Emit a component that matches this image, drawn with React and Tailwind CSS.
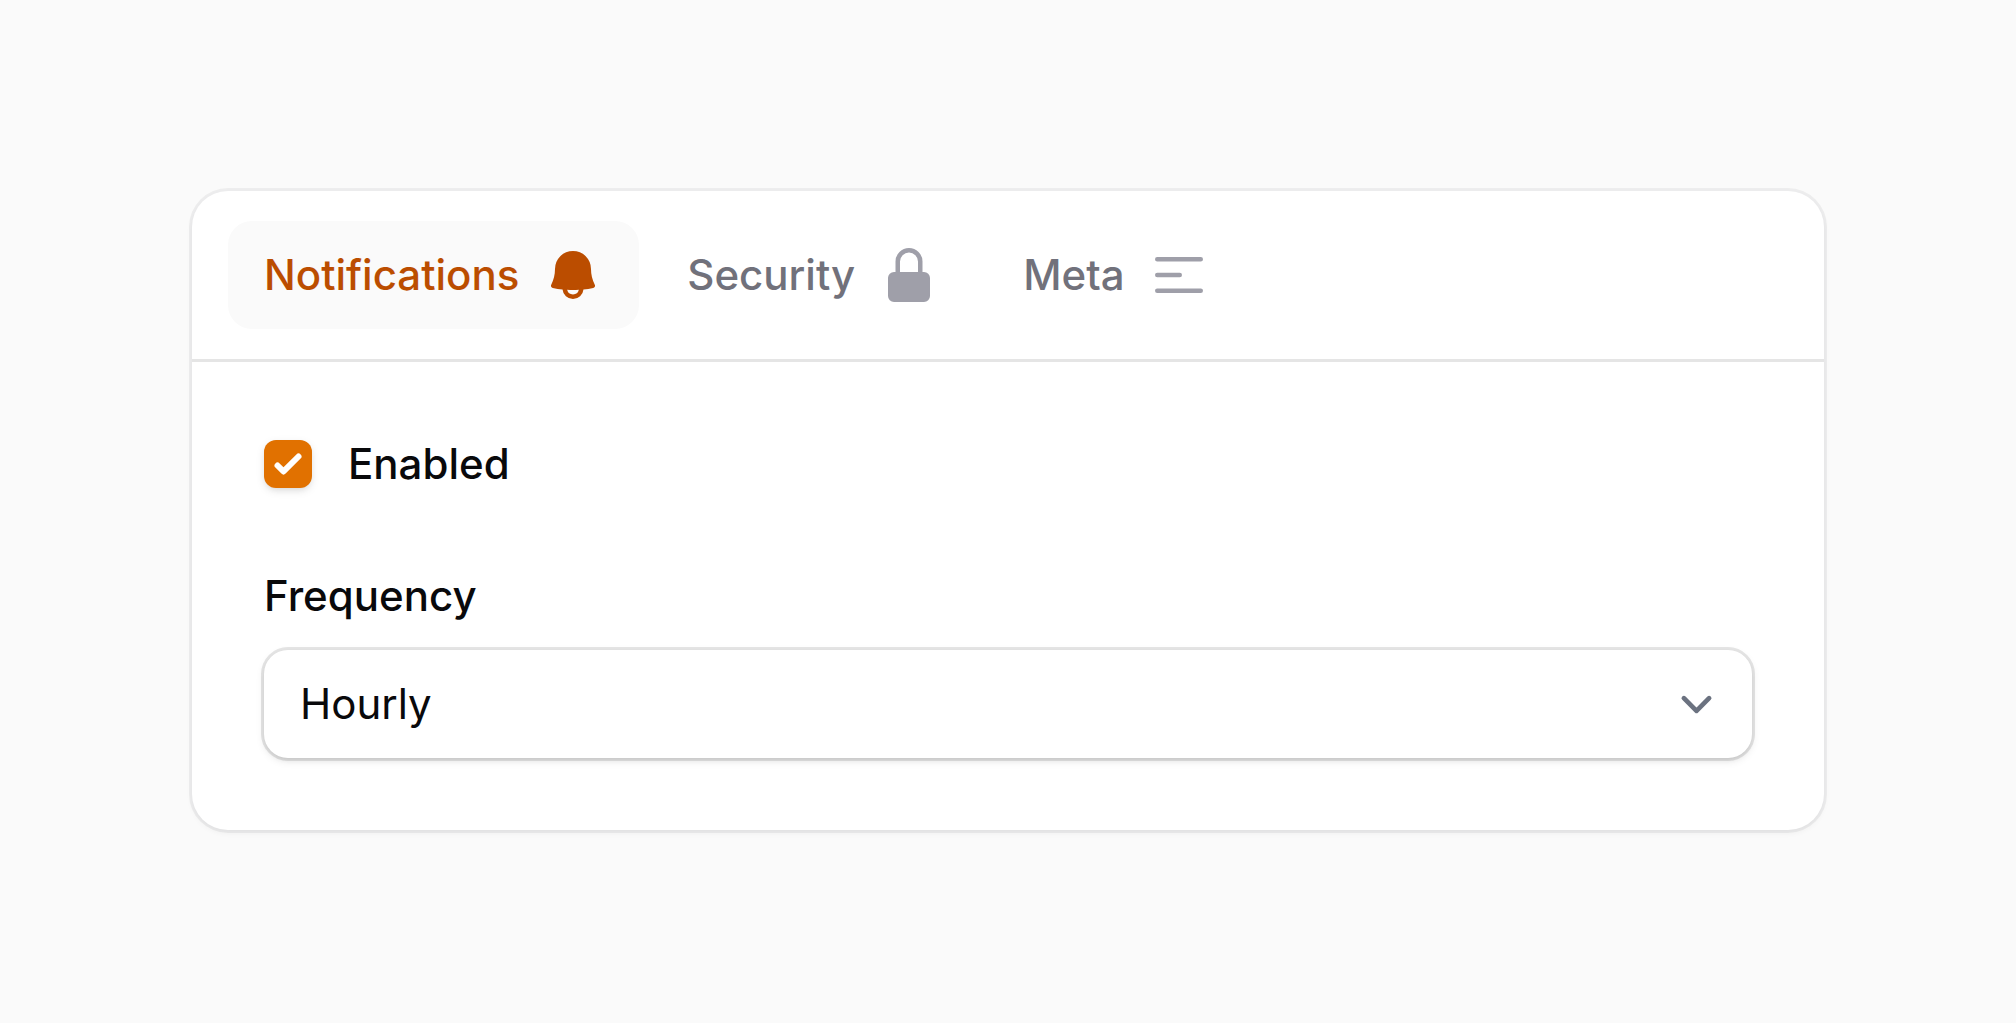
import React, { useState } from 'react'
import clsx from 'clsx'
import {
  HiMiniBars3CenterLeft,
  HiMiniBell,
  HiMiniLockClosed
} from 'react-icons/hi2'

const tabs = [
  { id: 'notifications', label: 'Notifications', icon: HiMiniBell },
  { id: 'security', label: 'Security', icon: HiMiniLockClosed },
  { id: 'meta', label: 'Meta', icon: HiMiniBars3CenterLeft },
]

const controlShadow = 'shadow-[0_3px_9px_0_rgb(0_0_0/0.1),0_3px_6px_-3px_rgb(0_0_0/0.1)]'

function TabList({ active, onChange }) {
  return (
    <div role="tablist" aria-label="Settings" className="flex gap-3 border-b-3 border-neutral-200 px-9 py-[30px]">
      {tabs.map(({ id, label, icon: Icon }) => {
        const isActive = id === active
        return (
          <button
            key={id}
            type="button"
            role="tab"
            aria-selected={isActive}
            onClick={() => onChange(id)}
            className={clsx(
              'flex items-center gap-6 rounded-3xl px-9 py-6 font-medium',
              isActive ? 'bg-zinc-50 text-amber-700' : 'text-zinc-500 hover:bg-zinc-50'
            )}
          >
            {label}
            <Icon className={clsx('size-15 shrink-0', isActive ? 'text-amber-700' : 'text-zinc-400')} />
          </button>
        )
      })}
    </div>
  )
}

function Checkbox({ label, checked, onChange }) {
  return (
    <label className="flex items-center gap-9 self-start font-medium">
      <span className="grid size-12">
        <input
          type="checkbox"
          checked={checked}
          onChange={(e) => onChange(e.target.checked)}
          className={clsx(
            'peer col-start-1 row-start-1 size-12 appearance-none rounded-xl bg-white ring-3 ring-zinc-950/10 checked:bg-amber-600 checked:ring-0',
            controlShadow
          )}
        />
        <svg viewBox="0 0 16 16" fill="currentColor" className="pointer-events-none col-start-1 row-start-1 hidden size-12 text-white peer-checked:block">
          <path d="M12.207 4.793a1 1 0 0 1 0 1.414l-5 5a1 1 0 0 1-1.414 0l-2-2a1 1 0 0 1 1.414-1.414L6.5 9.086l4.293-4.293a1 1 0 0 1 1.414 0z" />
        </svg>
      </span>
      {label}
    </label>
  )
}

function Select({ id, label, value, options, onChange }) {
  return (
    <div className="flex flex-col gap-6">
      <label htmlFor={id} className="self-start font-medium">{label}</label>
      <div className={clsx('grid items-center rounded-3xl bg-white ring-3 ring-zinc-950/10', controlShadow)}>
        <select
          id={id}
          value={value}
          onChange={(e) => onChange(e.target.value)}
          className="col-start-1 row-start-1 h-27 w-full appearance-none rounded-3xl bg-transparent pr-24 pl-9 outline-none"
        >
          {options.map((option) => (
            <option key={option}>{option}</option>
          ))}
        </select>
        <svg viewBox="0 0 20 20" fill="none" className="pointer-events-none col-start-1 row-start-1 mr-6 size-[63px] justify-self-end text-[#6b7280]">
          <path d="M6 8l4 4 4-4" stroke="currentColor" strokeWidth="1.5" strokeLinecap="round" strokeLinejoin="round" />
        </svg>
      </div>
    </div>
  )
}

function App() {
  const [activeTab, setActiveTab] = useState('notifications')
  const [enabled, setEnabled] = useState(true)
  const [frequency, setFrequency] = useState('Hourly')

  return (
    <main className="flex min-h-screen items-center bg-zinc-50 px-48 pb-0.5 font-['Inter',sans-serif] text-[42px] leading-[60px] text-zinc-950">
      <div className="w-full rounded-[36px] bg-white shadow-[0_3px_6px_0_rgb(0_0_0/0.05)] ring-3 ring-zinc-950/5">
        <TabList active={activeTab} onChange={setActiveTab} />

        {activeTab === 'notifications' && (
          <div role="tabpanel" className="flex flex-col gap-18 p-18">
            <Checkbox label="Enabled" checked={enabled} onChange={setEnabled} />
            <Select
              id="frequency"
              label="Frequency"
              value={frequency}
              options={['Hourly', 'Daily', 'Weekly']}
              onChange={setFrequency}
            />
          </div>
        )}
      </div>
    </main>
  )
}

export default App
